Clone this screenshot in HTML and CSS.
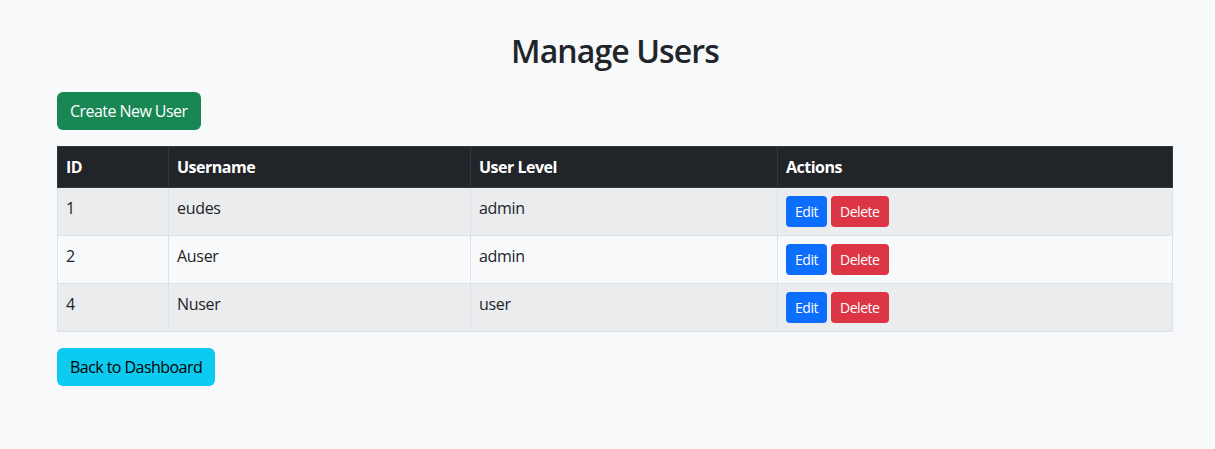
FILE: index.html
```html
<!DOCTYPE html>
<html lang="en">
<head>
<meta charset="utf-8">
<title>Manage Users</title>
<link rel="stylesheet" href="styles.css">
</head>
<body>
<div class="container">
  <h2 class="title">Manage Users</h2>
  <a class="btn btn-success create">Create New User</a>
  <table class="table">
    <colgroup>
      <col class="c-id"><col class="c-user"><col class="c-level"><col class="c-actions">
    </colgroup>
    <thead>
      <tr><th>ID</th><th>Username</th><th>User Level</th><th>Actions</th></tr>
    </thead>
    <tbody>
      <tr class="odd"><td>1</td><td>eudes</td><td>admin</td><td><a class="btn btn-sm btn-primary">Edit</a> <a class="btn btn-sm btn-danger">Delete</a></td></tr>
      <tr><td>2</td><td>Auser</td><td>admin</td><td><a class="btn btn-sm btn-primary">Edit</a> <a class="btn btn-sm btn-danger">Delete</a></td></tr>
      <tr class="odd"><td>4</td><td>Nuser</td><td>user</td><td><a class="btn btn-sm btn-primary">Edit</a> <a class="btn btn-sm btn-danger">Delete</a></td></tr>
    </tbody>
  </table>
  <a class="btn btn-info">Back to Dashboard</a>
</div>
</body>
</html>
```
FILE: styles.css
```css
html, body {
  margin: 0;
  background: #f8f9fa;
}
body {
  padding-left: 15px;
  font-family: "Open Sans", "Noto Sans", sans-serif;
  font-size: 16px;
  line-height: 1.5;
  color: #212529;
}
.container {
  max-width: 1140px;
  margin: 0 auto;
  padding: 24px 12px 0;
  box-sizing: border-box;
}
.title {
  margin: 8px 0 22px;
  text-align: center;
  font-size: 32px;
  font-weight: 600;
  line-height: 1.2;
  letter-spacing: -0.9px;
}
.btn {
  display: inline-block;
  padding: 6px 12px;
  font-size: 16px;
  line-height: 24px;
  border-radius: 6px;
  border: 1px solid transparent;
  text-decoration: none;
  letter-spacing: -0.55px;
  vertical-align: middle;
}
.btn-sm {
  padding: 4px 8px;
  font-size: 14px;
  line-height: 21px;
  border-radius: 4px;
  letter-spacing: -0.45px;
}
.btn-success { background: #198754; color: #fff; }
.btn-primary { background: #0d6efd; color: #fff; }
.btn-danger { background: #dc3545; color: #fff; }
.btn-info { background: #0dcaf0; color: #000; }
.create { margin-bottom: 16px; }
.table {
  width: 100%;
  border-collapse: collapse;
  table-layout: fixed;
  margin-bottom: 16px;
}
.c-id { width: 111px; }
.c-user { width: 302px; }
.c-level { width: 307px; }
.table th, .table td {
  border: 1px solid #dee2e6;
  padding: 8px;
  text-align: left;
  vertical-align: top;
}
.table th {
  background: #212529;
  color: #fff;
  border-color: #32383e;
  font-weight: 700;
  letter-spacing: -0.5px;
}
.table td { letter-spacing: -0.3px; }
.table tr.odd td { background: #ebecee; }
```
